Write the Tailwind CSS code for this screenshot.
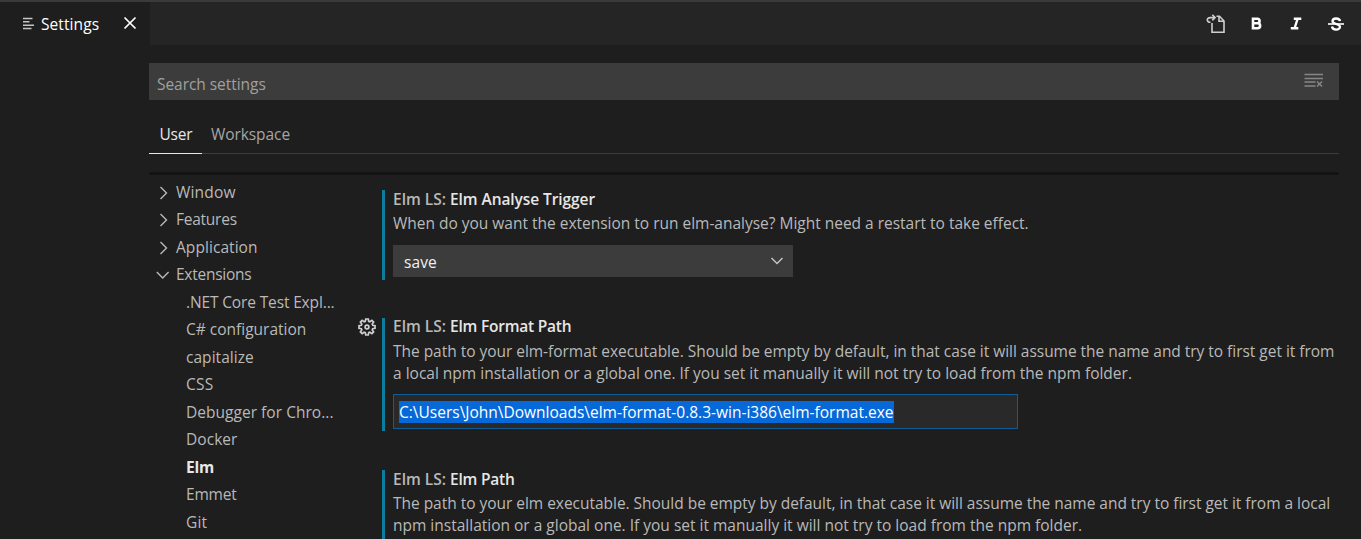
<!DOCTYPE html>
<html lang="en">
<head>
<meta charset="utf-8">
<title>Settings</title>
<script src="https://cdn.jsdelivr.net/npm/@tailwindcss/browser@4"></script>
</head>
<body class="h-[539px] w-[1361px] overflow-hidden bg-[#1e1e1e] font-['Open_Sans',sans-serif] text-[15.5px] leading-[22px] text-[#b9b9b9]">
<div class="flex h-full flex-col border-t-2 border-[#3a3a3a]">
  <header class="flex h-[43px] shrink-0 bg-[#252526]">
    <div class="flex w-[150px] items-center bg-[#1e1e1e] pl-[22px] text-white">
      <svg class="mb-px" width="13" height="13" viewBox="0 0 13 13" stroke="#c5c5c5" stroke-width="1.400"><path d="M1 1.500h9.500M1 4.800h6.500M1 8.200h11M1 11.500h8.500"/></svg>
      <span class="ml-[6px] w-[82px] tracking-[0.08px]">Settings</span>
      <svg class="mb-px" width="14" height="14" viewBox="0 0 14 14" stroke="#fff" stroke-width="1.700"><path d="M1.500 1.500l11 11M12.500 1.500l-11 11"/></svg>
    </div>
    <div class="flex flex-1 items-center justify-end pr-[17px] text-white">
      <svg class="mr-[25px]" width="20" height="20" viewBox="0 0 20 20" fill="none" stroke="#cfcfcf" stroke-width="1.600"><path d="M6 9v9.300h12V7l-4.500-4.800h-3M13 2.200v5h5M4.500 8.300C.3 8.300.3 3.600 4.200 3.600H9M6.300.8l2.800 2.800-2.800 2.800"/></svg>
      <svg class="mr-[28px]" width="11" height="13" viewBox="0 0 11 13" fill="none" stroke="#fff" stroke-width="2.600"><path d="M2 1.800h4.300c3 0 3 4.500 0 4.500H2h4.700c3.200 0 3.200 4.900 0 4.900H2zM2 1v11"/></svg>
      <svg class="mr-[26px]" width="12" height="13" viewBox="0 0 12 13" fill="none" stroke="#fff" stroke-width="2.400"><path d="M3.800 1.700h7.500M.8 11.300h7.500M7.700 1.500l-3.200 10"/></svg>
      <svg width="16" height="14" viewBox="0 0 16 14" fill="none" stroke="#fff" stroke-width="2.300"><path d="M12 4.200C11.500.6 4.500.6 4.500 4.200c0 3.200 7.500 2.400 7.500 5.600 0 3.700-7.500 3.700-8-.3"/><path d="M0 7h16" stroke-width="1.600"/></svg>
    </div>
  </header>
  <main class="ml-[149px] mt-[18px] flex min-h-0 w-[1190px] flex-1 flex-col">
    <div class="flex h-[37px] shrink-0 items-center justify-between bg-[#3c3c3c] pl-2 pr-[15px] text-[#a0a0a0]">
      <span class="pt-[5px] tracking-[-0.05px]">Search settings</span>
      <svg class="mb-[4px]" width="20" height="16" viewBox="0 0 20 16" fill="none" stroke="#868686" stroke-width="1.500"><path d="M.5 2.500h18.500M.5 6.500h18.500M.5 10h11M.5 14h11M13 9.500l5 5M18 9.500l-5 5"/></svg>
    </div>
    <nav class="mt-[14px] flex h-[40px] shrink-0 border-b border-[#3c3c3c]">
      <span class="-mb-px w-[53px] border-b border-[#e7e7e7] pl-[10.5px] pt-[9px] tracking-[-0.25px] text-[#e7e7e7]">User</span>
      <span class="ml-[9px] pt-[9px] tracking-[-0.08px] text-[#a5a5a5]">Workspace</span>
    </nav>
    <div class="mt-[18px] h-[3px] shrink-0 bg-[#141414]"></div>
    <div class="flex min-h-0 flex-1">
      <ul class="w-[200px] shrink-0 pt-[3.8px] leading-[27.5px] [&>li]:h-[27.5px] [&>li]:pl-[37px] [&>li]:whitespace-nowrap">
        <li class="flex items-center !pl-[7px] tracking-[0.2px]"><svg class="mr-[4px]" width="16" height="16" viewBox="0 0 16 16" fill="none" stroke="#b9b9b9" stroke-width="1.400"><path d="M4.500 2l6 6-6 6"/></svg>Window</li>
        <li class="flex items-center !pl-[7px] tracking-[-0.25px]"><svg class="mr-[4px]" width="16" height="16" viewBox="0 0 16 16" fill="none" stroke="#b9b9b9" stroke-width="1.400"><path d="M4.500 2l6 6-6 6"/></svg>Features</li>
        <li class="flex items-center !pl-[7px] tracking-[0.06px]"><svg class="mr-[4px]" width="16" height="16" viewBox="0 0 16 16" fill="none" stroke="#b9b9b9" stroke-width="1.400"><path d="M4.500 2l6 6-6 6"/></svg>Application</li>
        <li class="flex items-center !pl-[7px] tracking-[-0.25px]"><svg class="mr-[4px]" width="16" height="16" viewBox="0 0 16 16" fill="none" stroke="#b9b9b9" stroke-width="1.400"><path d="M.8 5l5.900 6L12.600 5"/></svg>Extensions</li>
        <li class="tracking-[-0.14px]">.NET Core Test Expl...</li>
        <li>C# configuration</li>
        <li class="tracking-[0.04px]">capitalize</li>
        <li class="tracking-[0.2px]">CSS</li>
        <li class="tracking-[0.03px]">Debugger for Chro...</li>
        <li class="tracking-[0.05px]">Docker</li>
        <li class="tracking-[-0.15px] font-bold text-[#e7e7e7]">Elm</li>
        <li class="tracking-[-0.2px]">Emmet</li>
        <li class="tracking-[0.2px]">Git</li>
      </ul>
      <div class="flex flex-1 flex-col pl-[9px] pt-[15px]">
        <section class="ml-[24px] h-[90px] shrink-0 border-l-[3px] border-[#0c7d9d] pl-[8px]">
          <h3 class="-mt-[2px] h-[22px] font-semibold"><span>Elm LS: </span><span class="tracking-[-0.08px] text-[#e7e7e7]">Elm Analyse Trigger</span></h3>
          <p class="mt-[2px] whitespace-nowrap tracking-[-0.012px]">When do you want the extension to run elm-analyse? Might need a restart to take effect.</p>
          <div class="mt-[11px] flex h-[32px] w-[400px] items-center justify-between bg-[#3c3c3c] pl-[11px] pr-[9px] text-[#f0f0f0]">
            <span class="pt-[2px] tracking-[0.1px]">save</span>
            <svg class="mb-px" width="14" height="10" viewBox="0 0 14 10" fill="none" stroke="#c5c5c5" stroke-width="1.500"><path d="M1.500 2L7 7.500 12.500 2"/></svg>
          </div>
        </section>
        <div class="mt-[38px] flex h-[113px] shrink-0">
          <svg class="mr-[6px]" width="18" height="18" viewBox="0 0 18 18" fill="none" stroke="#cfcfcf" stroke-width="1.700"><path d="M7.700 1h2.600l.4 2.300 1.200.5 2-1.400 1.700 1.700-1.400 2 .5 1.200 2.300.4v2.600l-2.300.4-.5 1.200 1.400 2-1.700 1.700-2-1.400-1.200.5-.4 2.300H7.700l-.4-2.300-1.200-.5-2 1.400-1.700-1.700 1.400-2-.5-1.200L1 10.300V7.700l2.300-.4.5-1.200-1.400-2 1.700-1.700 2 1.400 1.200-.5z"/><circle cx="9" cy="9" r="1.900"/></svg>
          <section class="flex-1 border-l-[3px] border-[#0c7d9d] pl-[8px]">
            <h3 class="-mt-[3px] h-[22px] font-semibold"><span>Elm LS: </span><span class="tracking-[-0.22px] text-[#e7e7e7]">Elm Format Path</span></h3>
            <p class="mt-[3px] whitespace-nowrap"><span class="tracking-[-0.03px]">The path to your elm-format executable. Should be empty by default, in that case it will assume the name and try to first get it from</span><br>a local npm installation or a global one. If you set it manually it will not try to load from the npm folder.</p>
            <div class="mt-[10px] flex h-[35px] w-[625px] items-center border border-solid border-[#105c94] bg-[#292929] pl-[5px]">
              <span class="whitespace-nowrap bg-[#0768d8] text-white">C:\Users\John\Downloads\elm-format-0.8.3-win-i386\elm-format.exe</span>
            </div>
          </section>
        </div>
        <section class="ml-[24px] mt-[39px] h-[90px] shrink-0 border-l-[3px] border-[#0c7d9d] pl-[8px]">
          <h3 class="-mt-[2px] h-[22px] font-semibold"><span>Elm LS: </span><span class="tracking-[-0.22px] text-[#e7e7e7]">Elm Path</span></h3>
          <p class="mt-[2px] whitespace-nowrap"><span class="tracking-[-0.028px]">The path to your elm executable. Should be empty by default, in that case it will assume the name and try to first get it from a local</span><br>npm installation or a global one. If you set it manually it will not try to load from the npm folder.</p>
        </section>
      </div>
    </div>
  </main>
</div>
</body>
</html>
